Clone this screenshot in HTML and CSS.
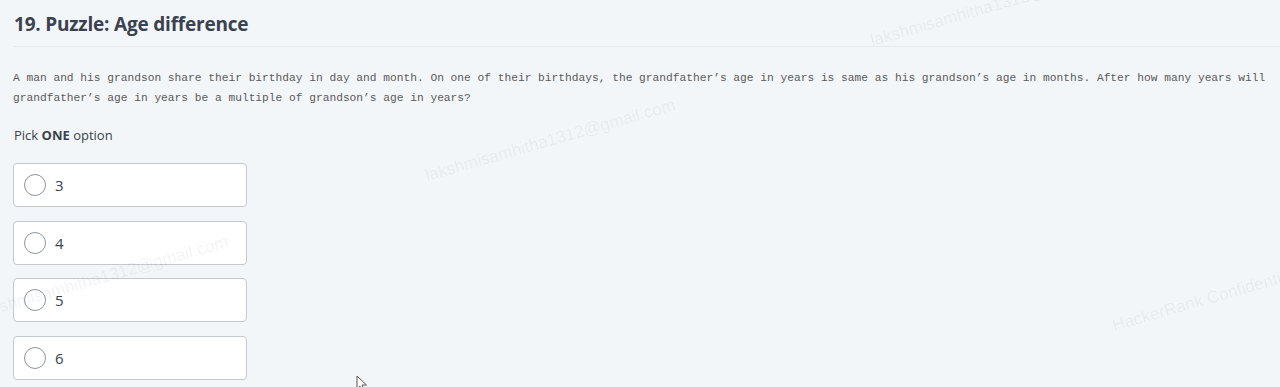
FILE: index.html
```
<!DOCTYPE html>
<html>
<head>
<meta charset="utf-8">
<link rel="stylesheet" href="styles.css">
</head>
<body>
<div class="page">
  <div class="header">
    <h1 class="title">19. Puzzle: Age difference</h1>
  </div>
  <p class="statement">A man and his grandson share their birthday in day and month. On one of their birthdays, the grandfather’s age in years is same as his grandson’s age in months. After how many years will grandfather’s age in years be a multiple of grandson’s age in years?</p>
  <p class="pick">Pick <strong>ONE</strong> option</p>
  <div class="options">
    <label class="option"><span class="radio"></span><span class="opt-text">3</span></label>
    <label class="option"><span class="radio"></span><span class="opt-text">4</span></label>
    <label class="option"><span class="radio"></span><span class="opt-text">5</span></label>
    <label class="option"><span class="radio"></span><span class="opt-text">6</span></label>
  </div>
  <div class="wm wm1">lakshmisamhitha1312@gmail.com</div>
  <div class="wm wm2">lakshmisamhitha1312@gmail.com</div>
  <div class="wm wm3">lakshmisamhitha1312@gmail.com</div>
  <div class="wm wm4">HackerRank Confidential</div>
  <svg class="cursor" width="12" height="18" viewBox="0 0 12 18"><path d="M1 1 L1 14 L4 11 L6.5 16.5 L8.5 15.5 L6 10 L10.5 10 Z" fill="#fff" stroke="#555" stroke-width="1"/></svg>
</div>
</body>
</html>
```
FILE: styles.css
```
html, body {
  margin: 0;
  padding: 0;
  background: #f3f6f8;
}
.page {
  position: relative;
  height: 387px;
  overflow: hidden;
  padding-left: 14px;
  font-family: "Open Sans", "Liberation Sans", sans-serif;
  color: #39424e;
}
.header {
  height: 46px;
  border-bottom: 1px solid #e4e9ec;
  display: flex;
  align-items: center;
}
.title {
  margin: 0;
  font-size: 19px;
  letter-spacing: -0.2px;
  font-weight: 700;
  color: #39424e;
  line-height: 1;
  padding-top: 2px;
}
.statement {
  margin: 21px 0 0 -1px;
  font-family: "Liberation Mono", monospace;
  font-size: 11.23px;
  line-height: 20px;
  color: #5a5a5a;
  width: 1262px;
}
.pick {
  margin: 18px 0 0 0;
  font-size: 13px;
  line-height: 18px;
  color: #39424e;
}
.pick strong { font-weight: 700; }
.options {
  display: flex;
  flex-direction: column;
  gap: 13.6px;
  margin-top: 19px;
  margin-left: -1px;
}
.option {
  box-sizing: border-box;
  width: 234px;
  height: 44px;
  background: #fff;
  border: 1px solid #c4c9cf;
  border-radius: 4px;
  display: flex;
  align-items: center;
  padding-left: 10px;
  gap: 9px;
}
.radio {
  box-sizing: border-box;
  width: 22px;
  height: 22px;
  border: 1px solid #8e959c;
  border-radius: 50%;
  background: #fff;
}
.opt-text {
  font-size: 15px;
  color: #39424e;
}
.wm {
  position: absolute;
  font-family: "Liberation Sans", Arial, sans-serif;
  font-size: 17px;
  color: rgba(60, 70, 80, 0.075);
  white-space: nowrap;
  transform: rotate(-16deg);
  transform-origin: 0 100%;
  pointer-events: none;
  line-height: 1;
}
.wm1 { left: 428px; top: 167px; }
.wm2 { left: 873px; top: 32px; }
.wm3 { left: -19px; top: 304px; }
.wm4 { left: 1115px; top: 317px; }
.cursor {
  position: absolute;
  left: 356px;
  top: 375px;
}
```
